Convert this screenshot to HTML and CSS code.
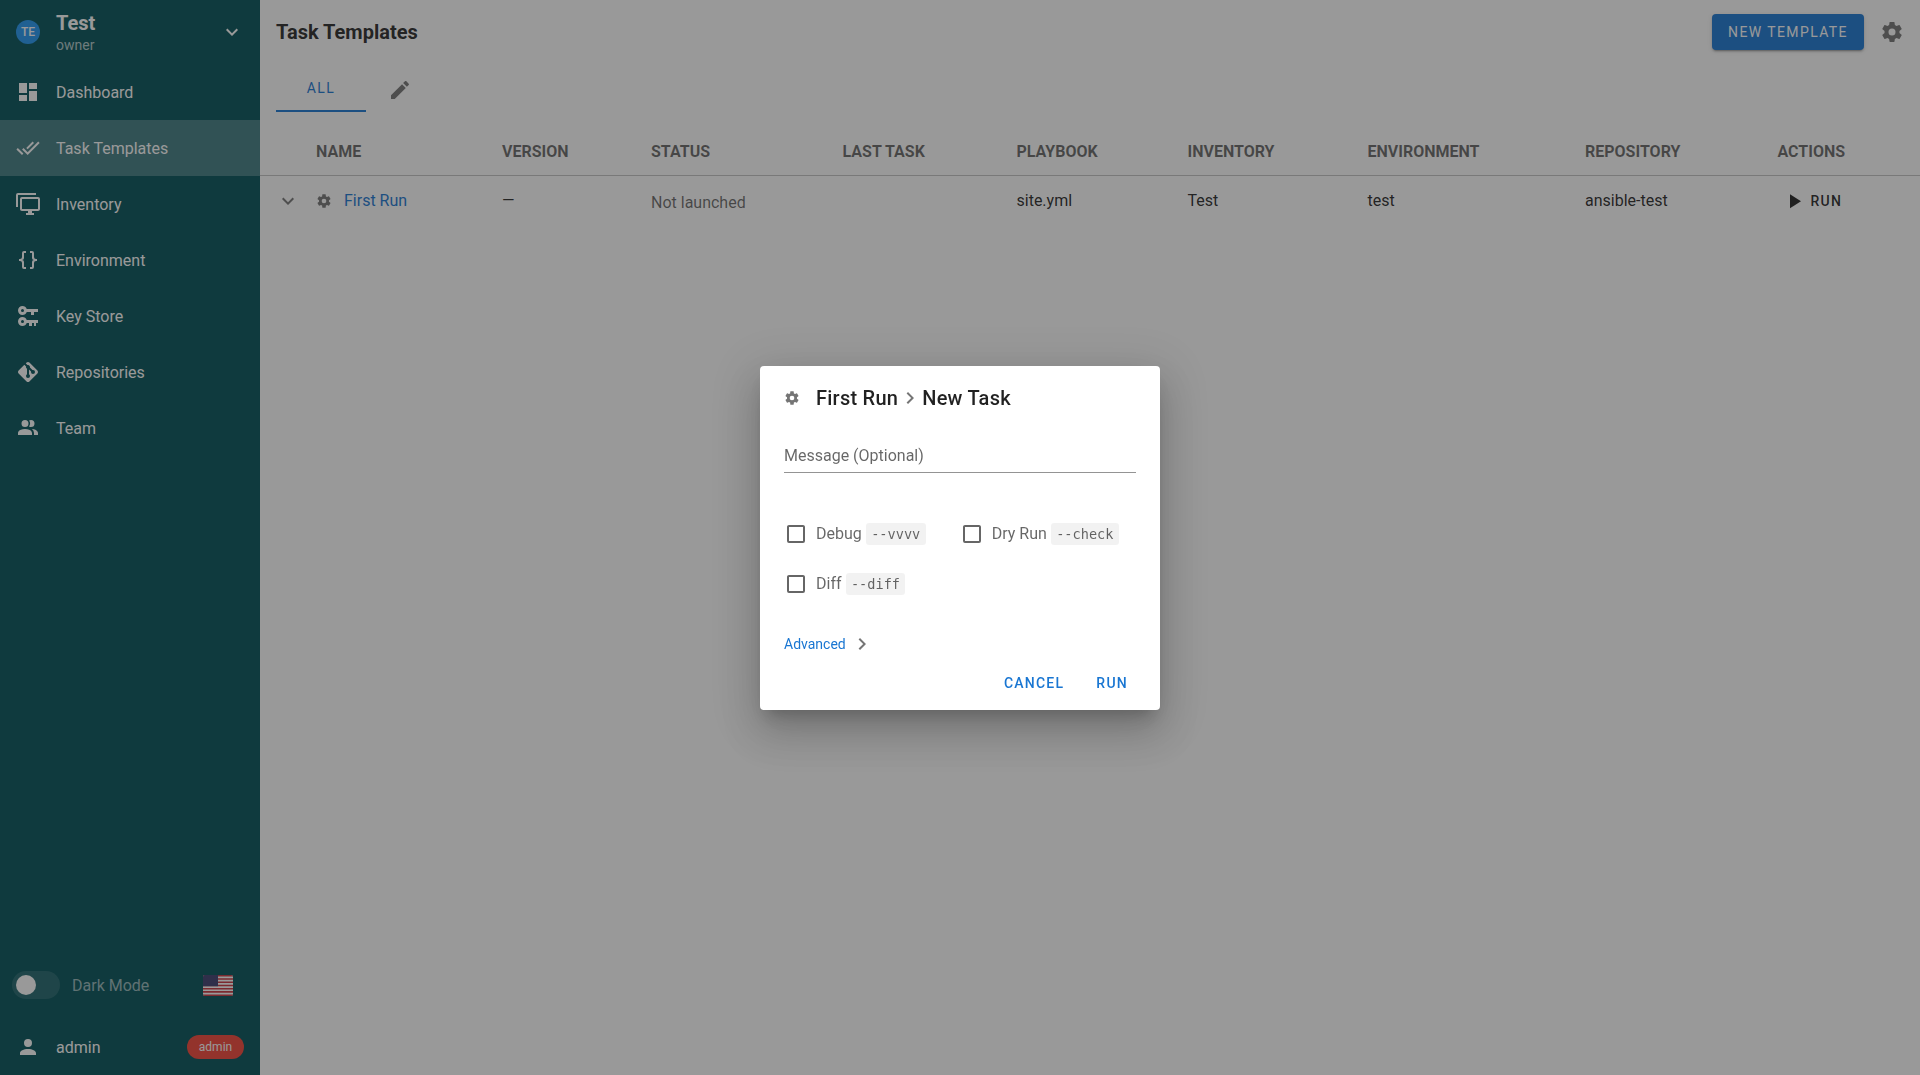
FILE: index.html
```html
<!DOCTYPE html>
<html lang="en">

<head>
    <meta charset="UTF-8">
    <meta name="viewport" content="width=device-width, initial-scale=1.0">
    <title>Task Templates</title>
    <link rel="stylesheet" href="styles.css">
</head>

<body>
    <svg class="icon-defs" xmlns="http://www.w3.org/2000/svg">
        <symbol id="i-dashboard" viewBox="0 0 24 24"><path d="M13,3V9H21V3M13,21H21V11H13M3,21H11V15H3M3,13H11V3H3V13Z"/></symbol>
        <symbol id="i-check-all" viewBox="0 0 24 24"><path d="M0.41,13.41L6,19L7.41,17.58L1.83,12M22.24,5.58L11.66,16.17L7.5,12L6.07,13.41L11.66,19L23.66,7M18,7L16.59,5.58L10.24,11.93L11.66,13.34L18,7Z"/></symbol>
        <symbol id="i-monitor" viewBox="0 0 24 24"><path d="M22,17V7H6V17H22M22,5A2,2 0 0,1 24,7V17C24,18.11 23.1,19 22,19H16V21H18V23H10V21H12V19H6C4.89,19 4,18.11 4,17V7A2,2 0 0,1 6,5H22M2,3V15H0V3A2,2 0 0,1 2,1H20V3H2Z"/></symbol>
        <symbol id="i-braces" viewBox="0 0 24 24"><path d="M8,3A2,2 0 0,0 6,5V9A2,2 0 0,1 4,11H3V13H4A2,2 0 0,1 6,15V19A2,2 0 0,0 8,21H10V19H8V14A2,2 0 0,0 6,12A2,2 0 0,0 8,10V5H10V3M16,3A2,2 0 0,1 18,5V9A2,2 0 0,0 20,11H21V13H20A2,2 0 0,0 18,15V19A2,2 0 0,1 16,21H14V19H16V14A2,2 0 0,1 18,12A2,2 0 0,1 16,10V5H14V3H16Z"/></symbol>
        <symbol id="i-key" viewBox="0 0 24 24"><path fill-rule="evenodd" d="M6.5,2C8.46,2 10.13,3.25 10.74,5H22V8H18V11H15V8H10.74C10.13,9.75 8.46,11 6.5,11C4,11 2,9 2,6.5C2,4 4,2 6.5,2M6.5,5A1.5,1.5 0 0,0 5,6.5A1.5,1.5 0 0,0 6.5,8A1.5,1.5 0 0,0 8,6.5A1.5,1.5 0 0,0 6.5,5M6.5,13C8.46,13 10.13,14.25 10.74,16H22V19H20V22H18V19H16V22H13V19H10.74C10.13,20.75 8.46,22 6.5,22C4,22 2,20 2,17.5C2,15 4,13 6.5,13M6.5,16A1.5,1.5 0 0,0 5,17.5A1.5,1.5 0 0,0 6.5,19A1.5,1.5 0 0,0 8,17.5A1.5,1.5 0 0,0 6.5,16Z"/></symbol>
        <symbol id="i-git" viewBox="0 0 24 24"><path d="M2.6,10.59L8.38,4.8L10.07,6.5C9.83,7.35 10.22,8.28 11,8.73V14.27C10.4,14.61 10,15.26 10,16A2,2 0 0,0 12,18A2,2 0 0,0 14,16C14,15.26 13.6,14.61 13,14.27V9.41L15.07,11.5C15,11.65 15,11.82 15,12A2,2 0 0,0 17,14A2,2 0 0,0 19,12A2,2 0 0,0 17,10C16.82,10 16.65,10 16.5,10.07L13.93,7.5C14.19,6.57 13.71,5.55 12.78,5.16C12.35,5 11.9,4.96 11.5,5.07L9.8,3.38L10.59,2.6C11.37,1.81 12.63,1.81 13.41,2.6L21.4,10.59C22.19,11.37 22.19,12.63 21.4,13.41L13.41,21.4C12.63,22.19 11.37,22.19 10.59,21.4L2.6,13.41C1.81,12.63 1.81,11.37 2.6,10.59Z"/></symbol>
        <symbol id="i-team" viewBox="0 0 24 24"><path d="M16 17V19H2V17S2 13 9 13 16 17 16 17M12.5 7.5A3.5 3.5 0 1 0 9 11A3.5 3.5 0 0 0 12.5 7.5M15.94 13A5.32 5.32 0 0 1 18 17V19H22V17S22 13.37 15.94 13M15 4A3.39 3.39 0 0 0 13.07 4.59A5 5 0 0 1 13.07 10.41A3.39 3.39 0 0 0 15 11A3.5 3.5 0 0 0 15 4Z"/></symbol>
        <symbol id="i-account" viewBox="0 0 24 24"><path d="M12,4A4,4 0 0,1 16,8A4,4 0 0,1 12,12A4,4 0 0,1 8,8A4,4 0 0,1 12,4M12,14C16.42,14 20,15.79 20,18V20H4V18C4,15.79 7.58,14 12,14Z"/></symbol>
        <symbol id="i-cog" viewBox="0 0 24 24"><path d="M12,15.5A3.5,3.5 0 0,1 8.5,12A3.5,3.5 0 0,1 12,8.5A3.5,3.5 0 0,1 15.5,12A3.5,3.5 0 0,1 12,15.5M19.43,12.97C19.47,12.65 19.5,12.33 19.5,12C19.5,11.67 19.47,11.34 19.43,11L21.54,9.37C21.73,9.22 21.78,8.95 21.66,8.73L19.66,5.27C19.54,5.05 19.27,4.96 19.05,5.05L16.56,6.05C16.04,5.66 15.5,5.32 14.87,5.07L14.5,2.42C14.46,2.18 14.25,2 14,2H10C9.75,2 9.54,2.18 9.5,2.42L9.13,5.07C8.5,5.32 7.96,5.66 7.44,6.05L4.95,5.05C4.73,4.96 4.46,5.05 4.34,5.27L2.34,8.73C2.21,8.95 2.27,9.22 2.46,9.37L4.57,11C4.53,11.34 4.5,11.67 4.5,12C4.5,12.33 4.53,12.65 4.57,12.97L2.46,14.63C2.27,14.78 2.21,15.05 2.34,15.27L4.34,18.73C4.46,18.95 4.73,19.03 4.95,18.95L7.44,17.94C7.96,18.34 8.5,18.68 9.13,18.93L9.5,21.58C9.54,21.82 9.75,22 10,22H14C14.25,22 14.46,21.82 14.5,21.58L14.87,18.93C15.5,18.67 16.04,18.34 16.56,17.94L19.05,18.95C19.27,19.03 19.54,18.95 19.66,18.73L21.66,15.27C21.78,15.05 21.73,14.78 21.54,14.63L19.43,12.97Z"/></symbol>
        <symbol id="i-down" viewBox="0 0 24 24"><path d="M7.41,8.58L12,13.17L16.59,8.58L18,10L12,16L6,10L7.41,8.58Z"/></symbol>
        <symbol id="i-right" viewBox="0 0 24 24"><path d="M8.59,16.58L13.17,12L8.59,7.41L10,6L16,12L10,18L8.59,16.58Z"/></symbol>
        <symbol id="i-pencil" viewBox="0 0 24 24"><path d="M20.71,7.04C21.1,6.65 21.1,6 20.71,5.63L18.37,3.29C18,2.9 17.35,2.9 16.96,3.29L15.12,5.12L18.87,8.87M3,17.25V21H6.75L17.81,9.93L14.06,6.18L3,17.25Z"/></symbol>
        <symbol id="i-play" viewBox="0 0 24 24"><path d="M8,5.14V19.14L19,12.14L8,5.14Z"/></symbol>
        <symbol id="i-box" viewBox="0 0 24 24"><path d="M19,3H5C3.89,3 3,3.89 3,5V19A2,2 0 0,0 5,21H19A2,2 0 0,0 21,19V5C21,3.89 20.1,3 19,3M19,5V19H5V5H19Z"/></symbol>
    </svg>

    <div class="app">
        <nav class="sidebar">
            <div class="project">
                <span class="avatar">TE</span>
                <div class="project-text">
                    <div class="project-name">Test</div>
                    <div class="project-role">owner</div>
                </div>
                <svg class="icon project-arrow"><use href="#i-down"/></svg>
            </div>

            <a class="nav-item"><svg class="icon"><use href="#i-dashboard"/></svg><span>Dashboard</span></a>
            <a class="nav-item active"><svg class="icon"><use href="#i-check-all"/></svg><span>Task Templates</span></a>
            <a class="nav-item"><svg class="icon"><use href="#i-monitor"/></svg><span>Inventory</span></a>
            <a class="nav-item"><svg class="icon"><use href="#i-braces"/></svg><span>Environment</span></a>
            <a class="nav-item"><svg class="icon"><use href="#i-key"/></svg><span>Key Store</span></a>
            <a class="nav-item"><svg class="icon"><use href="#i-git"/></svg><span>Repositories</span></a>
            <a class="nav-item"><svg class="icon"><use href="#i-team"/></svg><span>Team</span></a>

            <div class="sidebar-bottom">
                <div class="dark-row">
                    <span class="switch"><span class="switch-thumb"></span></span>
                    <span class="dark-label">Dark Mode</span>
                    <svg class="flag" viewBox="0 0 30 21">
                        <rect width="30" height="21" rx="2" fill="#fff"/>
                        <path fill="#c8323c" d="M2 0h26a2 2 0 0 1 2 1.6H0A2 2 0 0 1 2 0zM0 3.2h30v1.6H0zM0 6.4h30V8H0zM0 9.700h30v1.600H0zM0 12.900h30v1.600H0zM0 16.100h30v1.600H0zM0 19.400h30A2 2 0 0 1 28 21H2a2 2 0 0 1-2-1.600z"/>
                        <path fill="#3c3b6e" d="M2 0h13v11.300H0V2a2 2 0 0 1 2-2z"/>
                    </svg>
                </div>
                <div class="user-row">
                    <svg class="icon"><use href="#i-account"/></svg>
                    <span class="user-name">admin</span>
                    <span class="badge">admin</span>
                </div>
            </div>
        </nav>

        <main class="content">
            <header class="toolbar">
                <h1>Task Templates</h1>
                <button class="btn-new">New Template</button>
                <svg class="icon toolbar-cog"><use href="#i-cog"/></svg>
            </header>

            <div class="tabs">
                <div class="tab active">All</div>
                <svg class="icon tab-pencil"><use href="#i-pencil"/></svg>
            </div>

            <table class="templates">
                <colgroup>
                    <col class="c-expand">
                    <col class="c-name">
                    <col class="c-version">
                    <col class="c-status">
                    <col class="c-last">
                    <col class="c-playbook">
                    <col class="c-inventory">
                    <col class="c-env">
                    <col class="c-repo">
                    <col class="c-actions">
                </colgroup>
                <thead>
                    <tr>
                        <th></th>
                        <th>NAME</th>
                        <th>VERSION</th>
                        <th>STATUS</th>
                        <th>LAST TASK</th>
                        <th>PLAYBOOK</th>
                        <th>INVENTORY</th>
                        <th>ENVIRONMENT</th>
                        <th>REPOSITORY</th>
                        <th>ACTIONS</th>
                    </tr>
                </thead>
                <tbody>
                    <tr>
                        <td class="cell-expand"><svg class="icon"><use href="#i-down"/></svg></td>
                        <td>
                            <div class="name-cell">
                                <svg class="icon tiny"><use href="#i-cog"/></svg>
                                <a class="link">First Run</a>
                            </div>
                        </td>
                        <td class="version">&mdash;</td>
                        <td class="status">Not launched</td>
                        <td></td>
                        <td>site.yml</td>
                        <td>Test</td>
                        <td>test</td>
                        <td>ansible-test</td>
                        <td>
                            <div class="run-action">
                                <svg class="icon"><use href="#i-play"/></svg>
                                <span>Run</span>
                            </div>
                        </td>
                    </tr>
                </tbody>
            </table>
        </main>
    </div>

    <div class="overlay">
        <div class="dialog">
            <div class="dialog-title">
                <svg class="icon tiny"><use href="#i-cog"/></svg>
                <span>First Run</span>
                <svg class="icon title-arrow"><use href="#i-right"/></svg>
                <span>New Task</span>
            </div>

            <div class="message-field">Message (Optional)</div>

            <div class="check-row">
                <label class="check check-debug"><svg class="icon"><use href="#i-box"/></svg><span>Debug</span><code>--vvvv</code></label>
                <label class="check"><svg class="icon"><use href="#i-box"/></svg><span>Dry Run</span><code>--check</code></label>
            </div>
            <div class="check-row">
                <label class="check"><svg class="icon"><use href="#i-box"/></svg><span>Diff</span><code>--diff</code></label>
            </div>

            <div class="advanced">
                <a>Advanced</a>
                <svg class="icon"><use href="#i-right"/></svg>
            </div>

            <div class="dialog-actions">
                <button>Cancel</button>
                <button>Run</button>
            </div>
        </div>
    </div>
</body>

</html>
```

FILE: styles.css
```css
/* General */
* {
    box-sizing: border-box;
}

body {
    margin: 0;
    height: 1075px;
    overflow: hidden;
    font-family: Roboto, sans-serif;
    font-size: 14px;
    color: rgba(0, 0, 0, 0.87);
    background: #fff;
}

.icon-defs {
    display: none;
}

.icon {
    width: 24px;
    height: 24px;
    flex: none;
    fill: currentColor;
    display: block;
}

.icon.tiny {
    width: 16px;
    height: 16px;
}

.app {
    display: flex;
    height: 100%;
}

/* Sidebar */
.sidebar {
    width: 260px;
    flex: none;
    display: flex;
    flex-direction: column;
    background: #005057;
    color: #fff;
}

.project {
    height: 64px;
    display: flex;
    align-items: center;
    padding: 0 16px;
}

.avatar {
    width: 24px;
    height: 24px;
    border-radius: 50%;
    background: #2196f3;
    font-size: 12px;
    font-weight: 500;
    line-height: 24px;
    text-align: center;
    margin-right: 16px;
    flex: none;
}

.project-text {
    flex: 1;
}

.project-name {
    font-size: 20px;
    font-weight: 700;
    line-height: 24px;
    margin-top: 1px;
}

.project-role {
    font-size: 14px;
    line-height: 20px;
    color: rgba(255, 255, 255, 0.7);
}

.nav-item {
    height: 56px;
    display: flex;
    align-items: center;
    gap: 16px;
    padding: 0 16px;
    font-size: 16px;
}

.nav-item.active {
    background: rgba(255, 255, 255, 0.25);
}

.sidebar-bottom {
    margin-top: auto;
}

.dark-row {
    height: 56px;
    margin-bottom: 6px;
    display: flex;
    align-items: center;
    padding: 0 27px 0 12px;
}

.switch {
    width: 48px;
    height: 28px;
    border-radius: 14px;
    background: rgba(255, 255, 255, 0.12);
    display: flex;
    align-items: center;
    padding-left: 4px;
    flex: none;
}

.switch-thumb {
    width: 20px;
    height: 20px;
    border-radius: 50%;
    background: #fff;
}

.dark-label {
    flex: 1;
    margin-left: 12px;
    font-size: 16px;
    color: rgba(255, 255, 255, 0.6);
}

.flag {
    width: 30px;
    height: 21px;
    display: block;
}

.user-row {
    height: 56px;
    display: flex;
    align-items: center;
    padding: 0 16px;
}

.user-name {
    flex: 1;
    margin-left: 16px;
    font-size: 16px;
}

.badge {
    height: 24px;
    width: 57px;
    border-radius: 12px;
    background: #f44336;
    font-size: 12px;
    line-height: 24px;
    text-align: center;
}

/* Main */
.content {
    flex: 1;
    min-width: 0;
}

.toolbar {
    height: 64px;
    display: flex;
    align-items: center;
    padding: 0 16px;
}

.toolbar h1 {
    margin: 0;
    flex: 1;
    font-size: 20px;
    font-weight: 700;
}

.btn-new {
    height: 36px;
    width: 152px;
    border: none;
    border-radius: 4px;
    background: #1976d2;
    color: #fff;
    font-family: inherit;
    font-size: 14px;
    font-weight: 400;
    letter-spacing: 0.1em;
    text-transform: uppercase;
    box-shadow: 0 3px 1px -2px rgba(0, 0, 0, 0.2), 0 2px 2px rgba(0, 0, 0, 0.14), 0 1px 5px rgba(0, 0, 0, 0.12);
}

.toolbar-cog {
    margin-left: 16px;
    color: rgba(0, 0, 0, 0.54);
}

.tabs {
    height: 48px;
    display: flex;
    align-items: center;
    padding-left: 16px;
}

.tab {
    width: 90px;
    height: 48px;
    line-height: 48px;
    text-align: center;
    font-weight: 400;
    letter-spacing: 0.1em;
    text-transform: uppercase;
    color: #1976d2;
    border-bottom: 2px solid #1976d2;
}

.tab-pencil {
    margin-left: 22px;
    margin-top: 4px;
    color: rgba(0, 0, 0, 0.54);
}

/* Table */
.templates {
    width: 100%;
    table-layout: fixed;
    border-collapse: collapse;
    margin-top: 16px;
}

.c-expand { width: 40px; }
.c-name { width: 186px; }
.c-version { width: 149px; }
.c-status { width: 191.5px; }
.c-last { width: 174px; }
.c-playbook { width: 171px; }
.c-inventory { width: 180px; }
.c-env { width: 217.5px; }
.c-repo { width: 192.5px; }
.c-actions { width: 158.5px; }

.templates th {
    height: 47px;
    padding: 0 16px;
    text-align: left;
    font-size: 16px;
    font-weight: 700;
    color: rgba(0, 0, 0, 0.6);
    border-bottom: 1px solid rgba(0, 0, 0, 0.12);
}

.templates td {
    height: 51px;
    padding: 0 16px;
    font-size: 16px;
}

.templates .cell-expand {
    padding: 0 0 0 16px;
    color: rgba(0, 0, 0, 0.54);
}

.name-cell {
    display: flex;
    align-items: center;
    gap: 12px;
}

.name-cell .icon {
    color: rgba(0, 0, 0, 0.54);
}

.link {
    color: #1976d2;
}

.status {
    color: rgba(0, 0, 0, 0.6);
    padding-top: 4px !important;
}

.run-action {
    display: flex;
    align-items: center;
    gap: 5px;
    margin-left: 4px;
    font-size: 14px;
    font-weight: 500;
    letter-spacing: 0.0892em;
    text-transform: uppercase;
}

/* Dialog over the page */
.overlay {
    position: fixed;
    inset: 0;
    display: flex;
    align-items: center;
    justify-content: center;
    background: rgba(33, 33, 33, 0.46);
}

.dialog {
    width: 400px;
    height: 344px;
    background: #fff;
    border-radius: 4px;
    padding: 16px 24px 0;
    box-shadow: 0 11px 15px -7px rgba(0, 0, 0, 0.2), 0 24px 38px 3px rgba(0, 0, 0, 0.14), 0 9px 46px 8px rgba(0, 0, 0, 0.12);
}

.dialog-title {
    display: flex;
    align-items: center;
    height: 32px;
    font-size: 20px;
    font-weight: 500;
    letter-spacing: 0.0125em;
}

.dialog-title > .icon:first-child {
    color: rgba(0, 0, 0, 0.54);
    margin-right: 16px;
}

.title-arrow {
    color: rgba(0, 0, 0, 0.54);
}

.message-field {
    margin-top: 25px;
    height: 34px;
    font-size: 16px;
    line-height: 34px;
    color: rgba(0, 0, 0, 0.6);
    border-bottom: 1px solid rgba(0, 0, 0, 0.42);
}

.check-row {
    display: flex;
    height: 50px;
    align-items: center;
}

.message-field + .check-row {
    margin-top: 36px;
}

.check {
    display: flex;
    align-items: center;
    color: rgba(0, 0, 0, 0.6);
    font-size: 16px;
}

.check .icon {
    margin-right: 8px;
}

.check-debug {
    margin-right: 34px;
}

code {
    margin-left: 4px;
    padding: 0 5.400px;
    height: 22px;
    line-height: 22px;
    border-radius: 3px;
    background: rgba(0, 0, 0, 0.05);
    font-family: "DejaVu Sans Mono", monospace;
    font-size: 13.600px;
    color: rgba(0, 0, 0, 0.6);
}

.advanced {
    margin-top: 23px;
    display: flex;
    align-items: center;
    height: 24px;
    color: #1976d2;
}

.advanced .icon {
    margin-left: 4px;
    color: rgba(0, 0, 0, 0.54);
}

.dialog-actions {
    display: flex;
    justify-content: flex-end;
    margin-top: 9px;
    margin-right: -8px;
}

.dialog-actions button {
    height: 36px;
    padding: 0 16px;
    border: none;
    background: none;
    color: #1976d2;
    font-family: inherit;
    font-size: 14px;
    font-weight: 500;
    letter-spacing: 0.0892em;
    text-transform: uppercase;
}
```
